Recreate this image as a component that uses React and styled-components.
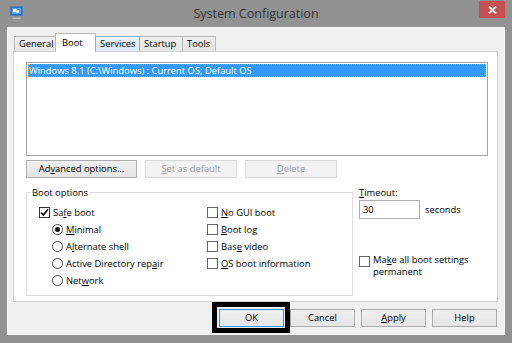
import styled, { createGlobalStyle } from "styled-components";

const GlobalStyle = createGlobalStyle`
  html, body {
    margin: 0;
    padding: 0;
    width: 512px;
    height: 343px;
    overflow: hidden;
    background: #929292;
  }
  body {
    font-family: "Open Sans", "Noto Sans", sans-serif;
    font-size: 9.4px;
    color: #000;
  }
`;

const Window = styled.div`
  box-sizing: border-box;
  width: 512px;
  height: 343px;
  padding: 0 7px 8px 7px;
  background: #929292;
  display: flex;
  flex-direction: column;
`;

const TitleBar = styled.div`
  height: 27px;
  display: grid;
  grid-template-columns: 26px 1fr 26px;
  align-items: start;
`;

const AppIcon = styled.svg`
  margin: 6px 0 0 3px;
`;

const Title = styled.div`
  text-align: center;
  font-size: 12.5px;
  line-height: 16px;
  padding-top: 6px;
  color: #333;
`;

const CloseButton = styled.div`
  width: 26px;
  height: 17px;
  margin-top: 1px;
  background: #c75050;
  display: flex;
  align-items: center;
  justify-content: center;
`;

const Client = styled.div`
  flex: 1;
  display: flex;
  flex-direction: column;
  background: #f0f0f0;
  border: 1px solid #f7f7f7;
  padding: 5px 6px 0 5px;
`;

const TabStrip = styled.div`
  height: 18px;
  display: flex;
  align-items: flex-end;
  padding-left: 1px;
  position: relative;
  z-index: 1;
`;

const Tab = styled.div`
  box-sizing: border-box;
  width: ${(p) => p.$w}px;
  height: ${(p) => (p.$active ? 19 : 15)}px;
  margin-bottom: ${(p) => (p.$active ? -1 : 0)}px;
  margin-left: ${(p) => (p.$first ? 0 : -1)}px;
  padding-left: ${(p) => (p.$active ? 6 : 4)}px;
  padding-top: ${(p) => (p.$active ? 2 : 0)}px;
  line-height: 14px;
  white-space: nowrap;
  border: 1px solid ${(p) => (p.$hover ? "#7eb4ea" : "#b9b9b9")};
  border-bottom: none;
  background: ${(p) =>
    p.$active ? "#fff" : p.$hover ? "linear-gradient(#ecf4fc, #dcecfc)" : "linear-gradient(#f0f0f0, #e5e5e5)"};
  position: relative;
  z-index: ${(p) => (p.$active || p.$hover ? 2 : 1)};
`;

const Panel = styled.div`
  flex: 1;
  background: #fff;
  border: 1px solid #cfcfcf;
  padding: 10px 9px 0 12px;
  display: flex;
  flex-direction: column;
`;

const ListBox = styled.div`
  box-sizing: border-box;
  height: 94px;
  border: 1px solid #a3a3a3;
  padding: 1px 1px;
  background: #fff;
`;

const ListItem = styled.div`
  height: 13px;
  line-height: 13px;
  padding-left: 1px;
  background: #3399ff;
  color: #fff;
  outline: 1px dotted #d99a40;
  outline-offset: -1px;
  white-space: nowrap;
`;

const ButtonRow = styled.div`
  display: flex;
  gap: 8px;
  margin-top: 4px;
`;

const Button = styled.button`
  box-sizing: border-box;
  width: ${(p) => p.$w}px;
  height: 18px;
  padding: 0;
  margin: 0;
  font: inherit;
  line-height: 16px;
  color: ${(p) => (p.disabled ? "#9a9a9a" : "#000")};
  border: 1px solid ${(p) => (p.$default ? "#3c8fe0" : p.disabled ? "#d9d9d9" : "#acacac")};
  background: ${(p) => (p.disabled ? "#f2f2f2" : "linear-gradient(#f0f0f0, #e5e5e5)")};
  box-shadow: ${(p) => (p.$default ? "inset 0 0 0 1px #ddeefb" : "none")};
`;

const U = styled.span`
  text-decoration: underline;
`;

const Lower = styled.div`
  display: flex;
  gap: 6px;
  margin-top: 8px;
`;

const GroupBox = styled.fieldset`
  box-sizing: border-box;
  width: 327px;
  margin: 0;
  padding: 0 0 6px 4px;
  border: 1px solid #dcdcdc;
  min-width: 0;
`;

const GroupLabel = styled.legend`
  padding: 0 1px;
  line-height: 13px;
`;

const GroupColumns = styled.div`
  display: flex;
  margin: 5px 0 0 8px;
`;

const Column = styled.div`
  width: ${(p) => p.$w}px;
  display: flex;
  flex-direction: column;
`;

const Option = styled.div`
  height: 17px;
  display: flex;
  align-items: center;
  gap: 3px;
  padding-left: ${(p) => (p.$indent ? 13 : 0)}px;
  white-space: nowrap;
`;

const Box = styled.span`
  box-sizing: border-box;
  width: 11px;
  height: 11px;
  flex: none;
  border: 1px solid ${(p) => (p.$checked ? "#333" : "#666")};
  background: #fff;
  display: flex;
  align-items: center;
  justify-content: center;
`;

const Radio = styled.span`
  box-sizing: border-box;
  width: 11px;
  height: 11px;
  flex: none;
  border: 1px solid #444;
  border-radius: 50%;
  background: #fff;
  display: flex;
  align-items: center;
  justify-content: center;

  &::after {
    content: "";
    width: 5px;
    height: 5px;
    border-radius: 50%;
    background: ${(p) => (p.$checked ? "#111" : "transparent")};
  }
`;

const Side = styled.div`
  display: flex;
  flex-direction: column;
`;

const FieldLabel = styled.div`
  line-height: 13px;
`;

const InputRow = styled.div`
  display: flex;
  align-items: center;
  gap: 5px;
  margin-top: 1px;
`;

const TextBox = styled.div`
  box-sizing: border-box;
  width: 61px;
  height: 19px;
  border: 1px solid #abadb3;
  background: #fff;
  padding-left: 3px;
  line-height: 17px;
`;

const WrapOption = styled.div`
  display: flex;
  align-items: flex-start;
  gap: 3px;
  margin-top: 35px;

  & > span:first-child {
    margin-top: 2px;
  }
`;

const WrapLabel = styled.div`
  display: flex;
  flex-direction: column;
  line-height: 12px;
  white-space: nowrap;
`;

const BottomRow = styled.div`
  height: 32px;
  box-sizing: border-box;
  padding: 7px 1px 7px 0;
  display: flex;
  justify-content: flex-end;
  gap: 6px;
`;

const Highlight = styled.div`
  position: relative;

  &::after {
    content: "";
    position: absolute;
    top: -7px;
    left: -7px;
    right: -6px;
    bottom: -6px;
    border: 5px solid #000;
    pointer-events: none;
  }
`;

const Check = () => (
  <svg width="9" height="9" viewBox="0 0 9 9">
    <path d="M1 4.5 L3.4 7 L8 1.3" fill="none" stroke="#000" strokeWidth="1.6" />
  </svg>
);

const CheckOption = ({ checked, children }) => (
  <Option>
    <Box $checked={checked}>{checked && <Check />}</Box>
    <span>{children}</span>
  </Option>
);

const RadioOption = ({ checked, children }) => (
  <Option $indent>
    <Radio $checked={checked} />
    <span>{children}</span>
  </Option>
);

export default function App() {
  return (
    <>
      <GlobalStyle />
      <Window>
        <TitleBar>
          <AppIcon width="13" height="13" viewBox="0 0 13 13">
            <rect x="0.5" y="0.5" width="12" height="9" fill="#2e6cc4" stroke="#4f7fb8" />
            <rect x="2" y="2" width="9" height="6" fill="#5aa3f0" />
            <path d="M3 3 h4 v3 h-4z" fill="#e8f2fc" />
            <path d="M6 4 h3 v3 h-3z" fill="#cfe4f8" />
            <rect x="4" y="10" width="5" height="1.5" fill="#8c8c8c" />
            <rect x="2.5" y="11.5" width="8" height="1.5" fill="#b8b8b8" />
          </AppIcon>
          <Title>System Configuration</Title>
          <CloseButton>
            <svg width="9" height="8" viewBox="0 0 9 8">
              <path d="M1 0.5 L8 7.5 M8 0.5 L1 7.5" stroke="#fff" strokeWidth="1.8" />
            </svg>
          </CloseButton>
        </TitleBar>
        <Client>
          <TabStrip>
            <Tab $w={42} $first>General</Tab>
            <Tab $w={41} $active>Boot</Tab>
            <Tab $w={45} $hover>Services</Tab>
            <Tab $w={44}>Startup</Tab>
            <Tab $w={34}>Tools</Tab>
          </TabStrip>
          <Panel>
            <ListBox>
              <ListItem>Windows 8.1 (C:\Windows) : Current OS; Default OS</ListItem>
            </ListBox>
            <ButtonRow>
              <Button $w={111}>
                Ad<U>v</U>anced options...
              </Button>
              <Button $w={92} disabled>
                <U>S</U>et as default
              </Button>
              <Button $w={92} disabled>
                <U>D</U>elete
              </Button>
            </ButtonRow>
            <Lower>
              <GroupBox>
                <GroupLabel>Boot options</GroupLabel>
                <GroupColumns>
                  <Column $w={168}>
                    <CheckOption checked>
                      Sa<U>f</U>e boot
                    </CheckOption>
                    <RadioOption checked>
                      <U>M</U>inimal
                    </RadioOption>
                    <RadioOption>
                      A<U>l</U>ternate shell
                    </RadioOption>
                    <RadioOption>
                      Active Directory rep<U>a</U>ir
                    </RadioOption>
                    <RadioOption>
                      Net<U>w</U>ork
                    </RadioOption>
                  </Column>
                  <Column $w={140}>
                    <CheckOption>
                      <U>N</U>o GUI boot
                    </CheckOption>
                    <CheckOption>
                      <U>B</U>oot log
                    </CheckOption>
                    <CheckOption>
                      Bas<U>e</U> video
                    </CheckOption>
                    <CheckOption>
                      <U>O</U>S boot information
                    </CheckOption>
                  </Column>
                </GroupColumns>
              </GroupBox>
              <Side>
                <FieldLabel>
                  <U>T</U>imeout:
                </FieldLabel>
                <InputRow>
                  <TextBox>30</TextBox>
                  <span>seconds</span>
                </InputRow>
                <WrapOption>
                  <Box />
                  <WrapLabel>
                    <span>
                      Ma<U>k</U>e all boot settings
                    </span>
                    <span>permanent</span>
                  </WrapLabel>
                </WrapOption>
              </Side>
            </Lower>
          </Panel>
          <BottomRow>
            <Highlight>
              <Button $w={65} $default>
                OK
              </Button>
            </Highlight>
            <Button $w={65}>Cancel</Button>
            <Button $w={65}>
              <U>A</U>pply
            </Button>
            <Button $w={65}>Help</Button>
          </BottomRow>
        </Client>
      </Window>
    </>
  );
}
